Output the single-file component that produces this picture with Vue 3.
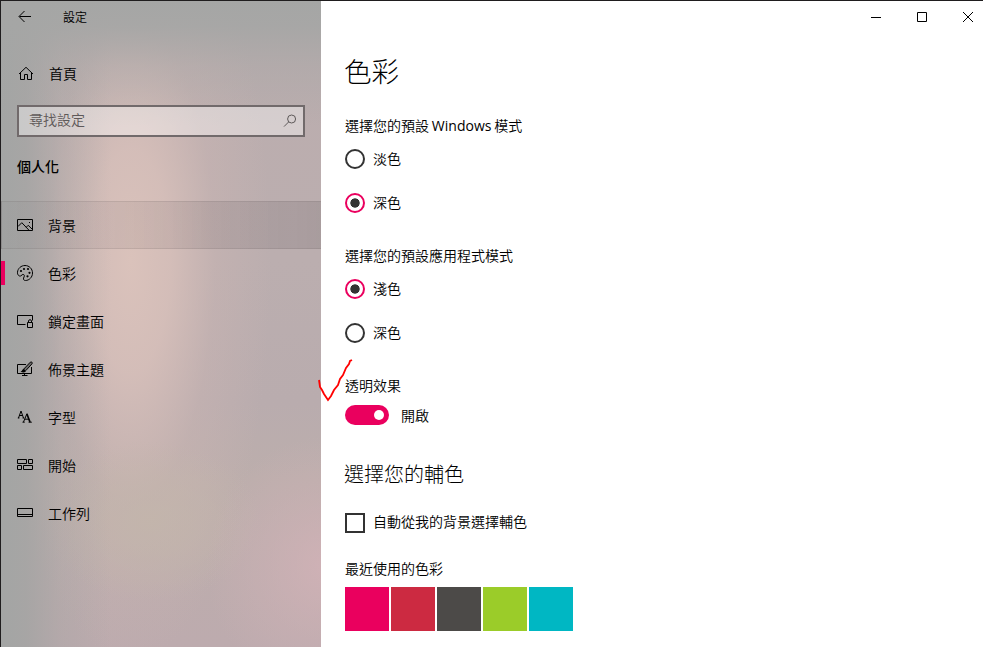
<script setup>
import { ref } from 'vue'

const navItems = [
  { id: 'background', label: '背景', hovered: true },
  { id: 'colors', label: '色彩', active: true },
  { id: 'lock', label: '鎖定畫面' },
  { id: 'themes', label: '佈景主題' },
  { id: 'fonts', label: '字型' },
  { id: 'start', label: '開始' },
  { id: 'taskbar', label: '工作列' },
]
const windowsModes = ['淡色', '深色']
const appModes = ['淺色', '深色']
const windowsMode = ref(1)
const appMode = ref(0)
const transparency = ref(true)
const autoAccent = ref(false)
const recentColors = ['#ea005e', '#cc2a41', '#4c4a48', '#9bcc29', '#00b7c3']
</script>

<template>
  <div class="window">
    <aside class="sidebar">
      <header class="side-title">
        <svg class="back" width="14" height="14" viewBox="0 0 14 14"><path d="M13 6.5H1.5M6.5 1L1 6.5L6.5 12" /></svg>
        <span>設定</span>
      </header>
      <div class="home">
        <svg width="16" height="16" viewBox="0 0 16 16"><path d="M1 8L8 1.3L15 8M2.5 6.8V13.5H6.5V8.5H9.5V13.5H13.5V6.8" /></svg>
        <span>首頁</span>
      </div>
      <div class="search">
        <span>尋找設定</span>
        <svg width="14" height="14" viewBox="0 0 14 14"><circle cx="8.6" cy="5" r="4" /><path d="M5.7 7.9L1 12.6" /></svg>
      </div>
      <h2 class="category">個人化</h2>
      <nav>
        <div v-for="item in navItems" :key="item.id" class="nav-item" :class="{ hovered: item.hovered, active: item.active }">
          <svg width="18" height="18" viewBox="0 0 18 18">
            <template v-if="item.id === 'background'">
              <path d="M1.5 3.5H16.5V14.5H1.5ZM2 10.5L5.8 6.7L12.8 14M10.3 11.2L12.2 9.3L16.5 13.5" />
              <rect class="solid" x="13" y="6" width="1" height="1" />
            </template>
            <template v-else-if="item.id === 'colors'">
              <path d="M1.5 8.2C1.8 4.4 5.1 1.5 9 1.5C13.2 1.5 16.5 4.8 16.5 9C16.5 13.2 13.2 16.5 9.5 16.5C7.8 16.5 7.1 15.3 7.6 14L8.3 12.2C8.7 10.8 7.2 9.8 6.1 10.8L5 11.8C3.2 12.8 1.2 10.8 1.5 8.2Z" />
              <g class="solid"><circle cx="5" cy="7" r="1.1" /><circle cx="8" cy="5" r="1.1" /><circle cx="12" cy="5" r="1.1" /><circle cx="13.5" cy="8.8" r="1.1" /><circle cx="11.5" cy="12.3" r="1.1" /></g>
            </template>
            <path v-else-if="item.id === 'lock'" d="M9.5 12.5H1.5V3.5H16.5V8.5M11.5 10.5H16.5V15.5H11.5ZM12.5 10.5V9C12.5 7.3 15.5 7.3 15.5 9V10.5" />
            <template v-else-if="item.id === 'themes'">
              <path d="M10 4.5H1.5V13.5H15.5V7M8.5 13.5V15.5M6 15.5H11.5" />
              <path class="brush" d="M7.8 9L14.3 2.2C15.4 1.3 16.9 2.6 16 3.8L9.8 10.6" />
              <path class="solid" d="M7.8 8.7C6.2 9 6.6 11 4.5 11.4C6.8 13 9.8 12.7 9.9 10.7Z" />
            </template>
            <template v-else-if="item.id === 'fonts'">
              <path d="M2.5 10L5 3L7.5 10M3.3 7.5H6.7M1.8 10H3.4M6.6 10H8.2" />
              <path d="M7.5 14L11 5.5M8.7 11.2H13M6.5 14.2H8.7M12.6 14.2H15.8" />
              <path class="heavy" d="M10.9 6L14 14" />
            </template>
            <path v-else-if="item.id === 'start'" d="M1.5 3.5H10.5V7.5H1.5ZM12.5 3.5H16.5V7.5H12.5ZM1.5 9.5H5.5V13.5H1.5ZM7.5 9.5H16.5V13.5H7.5Z" />
            <path v-else d="M1.5 4.5H16.5V12.5H1.5ZM1.5 10.5H16.5" />
          </svg>
          <span>{{ item.label }}</span>
        </div>
      </nav>
    </aside>

    <main class="content">
      <div class="caption">
        <svg width="12" height="12" viewBox="0 0 12 12"><path d="M1 6.5H11" /></svg>
        <svg width="12" height="12" viewBox="0 0 12 12"><path d="M1.5 1.5H10.5V10.5H1.5Z" /></svg>
        <svg width="12" height="12" viewBox="0 0 12 12"><path d="M1 1L11 11M11 1L1 11" /></svg>
      </div>
      <h1>色彩</h1>

      <section class="modes">
        <p class="label">選擇您的預設 <span class="latin">Windows</span> 模式</p>
        <div v-for="(mode, i) in windowsModes" :key="i" class="option" @click="windowsMode = i">
          <i class="radio" :class="{ checked: windowsMode === i }"></i><span>{{ mode }}</span>
        </div>
      </section>
      <section class="modes">
        <p class="label">選擇您的預設應用程式模式</p>
        <div v-for="(mode, i) in appModes" :key="i" class="option" @click="appMode = i">
          <i class="radio" :class="{ checked: appMode === i }"></i><span>{{ mode }}</span>
        </div>
      </section>
      <section class="transparency">
        <p class="label">透明效果</p>
        <div class="switch-row" @click="transparency = !transparency">
          <i class="switch" :class="{ on: transparency }"></i><span>開啟</span>
        </div>
        <svg class="mark" width="36" height="46" viewBox="0 0 36 46"><path d="M2 22L3 29L5 32L7 36L11 42L14 38L17 32L21 27L23 21L26 17L29 10L32 6L33 3L35 2" /></svg>
      </section>

      <h3>選擇您的輔色</h3>
      <div class="check-row" @click="autoAccent = !autoAccent">
        <i class="checkbox"></i><span>自動從我的背景選擇輔色</span>
      </div>
      <p class="label recent">最近使用的色彩</p>
      <div class="swatches">
        <i v-for="c in recentColors" :key="c" :style="{ background: c }"></i>
      </div>
    </main>
  </div>
</template>

<style>
body { margin: 0; background: #fff; overflow: hidden; }
</style>

<style scoped>
* { box-sizing: border-box; }
.window {
  display: grid;
  grid-template-columns: 320px 1fr;
  width: 983px;
  height: 647px;
  border-top: 1px solid #1f1d1e;
  border-left: 1px solid #1f1d1e;
  background: #fff;
  color: #000;
  font: 350 14px/20px "Open Sans", "Noto Sans CJK TC", sans-serif;
}
h1, h2, h3, p { margin: 0; }
i { display: block; flex: none; }
svg { flex: none; fill: none; stroke: #000; stroke-width: 1; }
.solid { fill: #000; stroke: none; }
.brush { fill: rgba(0, 0, 0, .35); }
.heavy { stroke-width: 1.7; }
.latin { font-weight: 400; }

.sidebar {
  background:
    linear-gradient(180deg, #a5a6a5 0, rgba(165, 166, 165, .9) 25px, rgba(165, 166, 165, .4) 65px, rgba(165, 166, 165, 0) 125px),
    linear-gradient(90deg, #a3a5a4 0, rgba(163, 164, 163, .85) 25px, rgba(163, 164, 163, .35) 60px, rgba(163, 164, 163, 0) 110px),
    radial-gradient(ellipse 120px 130px at 325px 565px, rgba(210, 178, 183, .85), rgba(210, 178, 183, .4) 50%, rgba(210, 178, 183, 0)),
    radial-gradient(ellipse 110px 80px at 150px 520px, rgba(195, 182, 171, .8), rgba(195, 182, 171, .45) 50%, rgba(195, 182, 171, 0)),
    radial-gradient(ellipse 140px 400px at 130px 260px, #dac2bb 0, rgba(216, 192, 186, .85) 28%, rgba(205, 182, 179, .4) 60%, rgba(195, 178, 176, 0) 100%),
    linear-gradient(180deg, #bbadae 0, #bbaeaf 40%, #b9acae 62%, #bcaeac 74%, #bdabae 100%);
}
.side-title {
  display: flex;
  align-items: center;
  gap: 31px;
  height: 32px;
  padding-left: 17px;
  font-size: 12px;
}
.side-title span, .nav-item span { margin-top: 2px; }
.home {
  display: flex;
  align-items: center;
  gap: 15px;
  height: 48px;
  margin-top: 17px;
  padding-left: 17px;
}
.home span { margin-top: -1px; }
.search {
  display: flex;
  align-items: center;
  justify-content: space-between;
  height: 32px;
  margin: 7px 16px 0;
  padding: 0 6px 2px 10px;
  border: 2px solid #716a6b;
  background: rgba(255, 255, 255, .4);
  color: #5e5959;
}
.search svg { stroke: #5e5959; margin-top: 2px; }
.category {
  height: 64px;
  padding: 20px 16px 0;
  font-size: 14px;
  font-weight: 500;
}
.nav-item {
  position: relative;
  display: flex;
  align-items: center;
  gap: 14px;
  height: 48px;
  padding-left: 15px;
}
.nav-item.hovered {
  background: linear-gradient(90deg, rgba(80, 70, 75, .04), rgba(80, 70, 75, .09) 40%, rgba(80, 70, 75, .17));
  border: 1px solid rgba(80, 70, 75, .12);
  border-right: 0;
  padding-left: 14px;
}
.nav-item.active::before {
  content: "";
  position: absolute;
  left: 0;
  top: 12px;
  width: 4px;
  height: 24px;
  background: #ea005e;
}

.content { padding-left: 24px; }
.caption {
  display: flex;
  justify-content: flex-end;
  align-items: center;
  gap: 34px;
  height: 32px;
  padding-right: 9px;
}
h1 {
  height: 83px;
  margin-left: -1px;
  padding-top: 19px;
  font-size: 27.5px;
  font-weight: 300;
  line-height: 40px;
}
.label { height: 20px; word-spacing: -.8px; }
.modes { height: 130px; }
.modes .label { height: 21px; }
.option {
  display: flex;
  align-items: center;
  gap: 8px;
  height: 44px;
}
.radio {
  width: 20px;
  height: 20px;
  border: 2px solid #333;
  border-radius: 50%;
}
.radio.checked {
  border-color: #ea005e;
  background: radial-gradient(circle, #333 4.3px, transparent 5px);
}
.transparency { position: relative; height: 84px; }
.switch-row {
  display: flex;
  align-items: center;
  gap: 12px;
  height: 20px;
  margin-top: 9px;
}
.switch-row span { margin-top: 1px; }
.switch {
  display: flex;
  align-items: center;
  width: 44px;
  height: 20px;
  padding: 0 5px;
  border-radius: 10px;
  background: #777;
}
.switch.on { justify-content: flex-end; background: #ea005e; }
.switch::after {
  content: "";
  width: 10px;
  height: 10px;
  border-radius: 50%;
  background: #fff;
}
.mark {
  position: absolute;
  left: -28px;
  top: -18px;
  stroke: #f00;
  stroke-width: 1.8;
}
h3 {
  height: 53px;
  margin-left: -1px;
  font-size: 20px;
  font-weight: 300;
  line-height: 30px;
}
.check-row {
  display: flex;
  align-items: center;
  gap: 8px;
  height: 20px;
}
.check-row span { margin-top: -2px; }
.checkbox { width: 20px; height: 20px; border: 2px solid #333; }
.recent { margin-top: 26px; }
.swatches { display: flex; gap: 2px; margin-top: 8px; }
.swatches i { width: 44px; height: 44px; }
</style>
